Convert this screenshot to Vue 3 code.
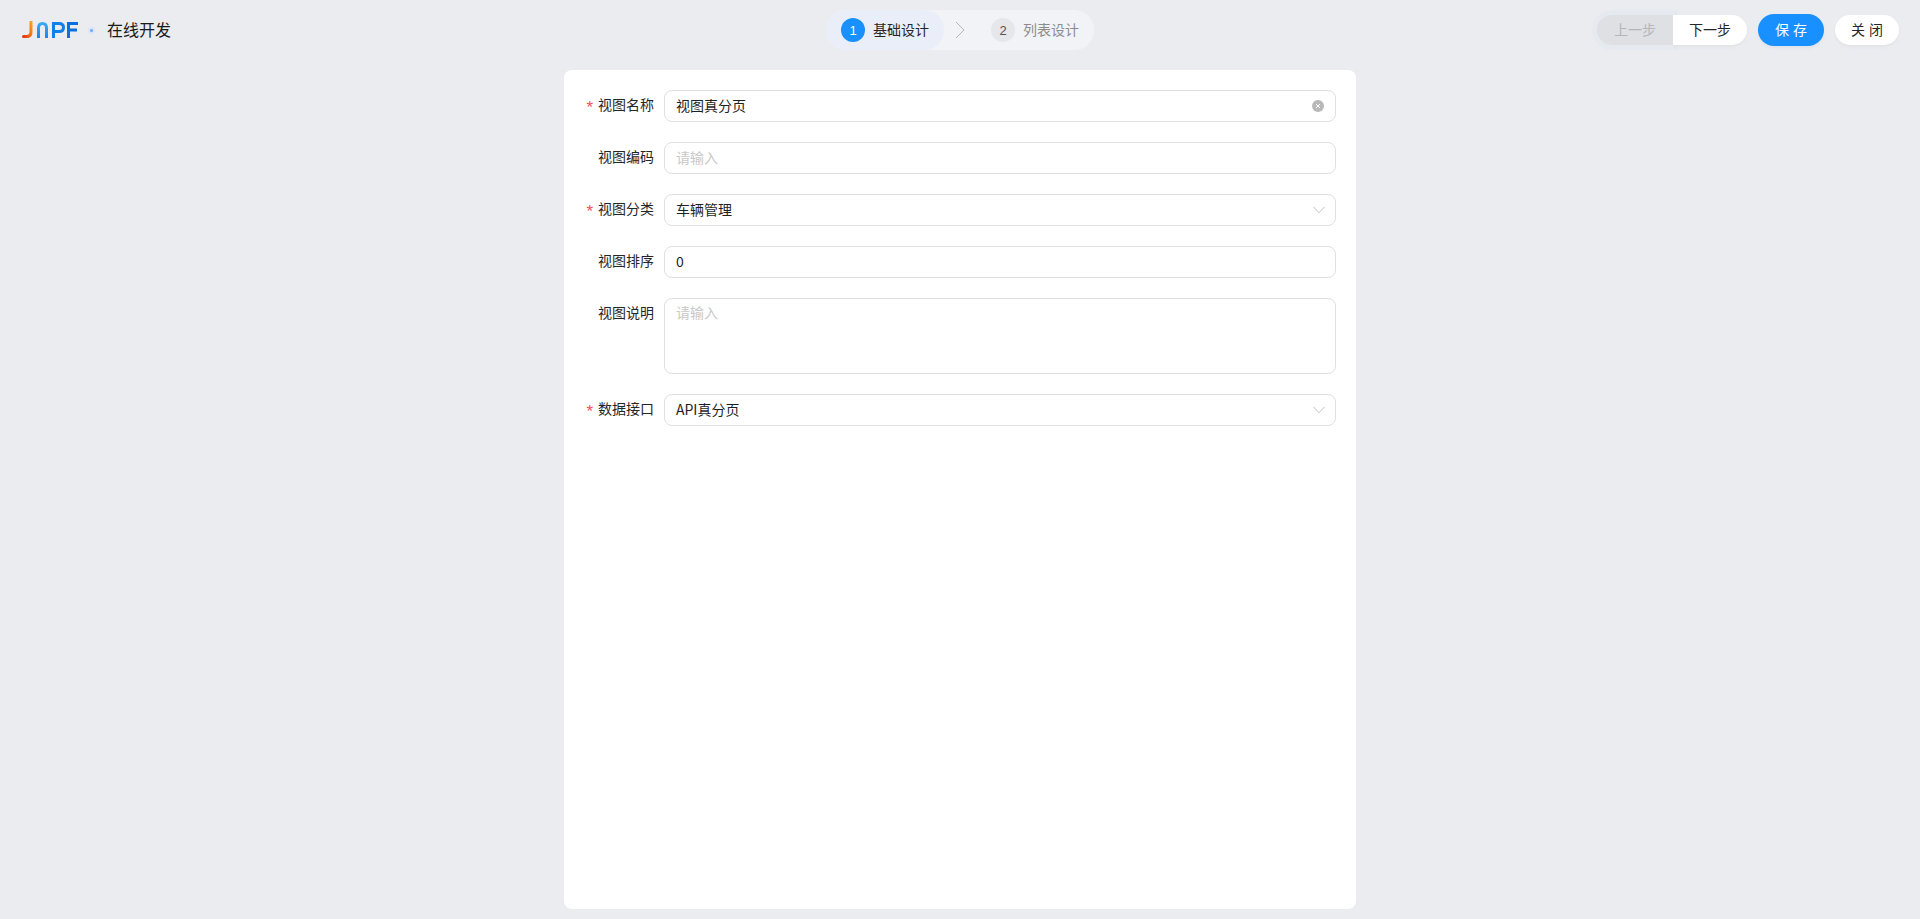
<script setup>
const fields = [
  { label: '视图名称', required: true, value: '视图真分页', clear: true },
  { label: '视图编码', placeholder: '请输入' },
  { label: '视图分类', required: true, value: '车辆管理', arrow: true },
  { label: '视图排序', value: '0' },
  { label: '视图说明', placeholder: '请输入', area: true },
  { label: '数据接口', required: true, value: 'API真分页', arrow: true }
]
</script>

<template>
  <div class="page">
    <header class="head">
      <div class="brand">
        <svg class="logo" width="58" height="18" viewBox="0 0 58 18" fill="none">
          <defs>
            <linearGradient id="jg" x1="0" y1="1" x2="1" y2="0">
              <stop offset="0" stop-color="#e8380d" />
              <stop offset="1" stop-color="#f9a11b" />
            </linearGradient>
            <linearGradient id="ng" x1="0" y1="0" x2="0" y2="1">
              <stop offset="0" stop-color="#3aa8f2" />
              <stop offset="1" stop-color="#1a86e6" />
            </linearGradient>
          </defs>
          <path d="M10 1V11Q10 15.500 5.500 15.500H2.500" stroke="url(#jg)" stroke-width="3" stroke-linecap="round" />
          <path d="M17.500 17V7Q17.500 2.500 21.500 2.500Q25.500 2.500 25.500 7V17" stroke="url(#ng)" stroke-width="3" />
          <path d="M32.500 17V2.500H38Q42.500 2.500 42.500 6.500Q42.500 10.500 38 10.500H33" stroke="#1480e6" stroke-width="3" />
          <path d="M47.500 17V2.500H57M47.500 9H56" stroke="#0b70dc" stroke-width="3" />
        </svg>
        <span class="dot"></span>
        <span class="title">在线开发</span>
      </div>

      <div class="steps">
        <div class="step active">
          <span class="num">1</span>
          <span class="step-text">基础设计</span>
        </div>
        <svg class="chev" width="10" height="18" viewBox="0 0 10 18" fill="none">
          <path d="M1 1L9 9L1 17" stroke="#b4b6bb" stroke-width="1" />
        </svg>
        <div class="step todo">
          <span class="num">2</span>
          <span class="step-text">列表设计</span>
        </div>
      </div>

      <div class="actions">
        <div class="pair">
          <button class="btn prev">上一步</button>
          <button class="btn next">下一步</button>
        </div>
        <button class="btn save">保 存</button>
        <button class="btn close">关 闭</button>
      </div>
    </header>

    <main class="card">
      <div v-for="f in fields" :key="f.label" class="row">
        <label class="label"><i v-if="f.required">*</i>{{ f.label }}</label>
        <div class="input" :class="{ area: f.area }">
          <span v-if="f.value">{{ f.value }}</span>
          <span v-else class="ph">{{ f.placeholder }}</span>
          <svg v-if="f.clear" class="clear" width="12" height="12" viewBox="0 0 12 12">
            <circle cx="6" cy="6" r="6" fill="#b8b8b8" />
            <path d="M4 4L8 8M8 4L4 8" stroke="#fff" stroke-width="1" />
          </svg>
          <svg v-if="f.arrow" class="arrow" width="12" height="8" viewBox="0 0 12 8" fill="none">
            <path d="M.5 .8L6 6.800L11.500 .8" stroke="#c4c4c4" stroke-width="1" />
          </svg>
        </div>
      </div>
    </main>
  </div>
</template>

<style>
html, body { margin: 0; background: #ebecf0; }
</style>

<style scoped>
.page {
  height: 919px;
  box-sizing: border-box;
  padding-bottom: 10px;
  display: flex;
  flex-direction: column;
  background: #ebecf0;
  font-family: "Noto Sans CJK SC", "Noto Sans", sans-serif;
  font-size: 14px;
  color: #1f2329;
  overflow: hidden;
}
.head {
  flex: 0 0 70px;
  height: 70px;
  box-sizing: border-box;
  padding: 0 21px 10px;
  display: grid;
  grid-template-columns: 1fr auto 1fr;
  align-items: center;
}
.brand { display: flex; align-items: center; }
.logo { display: block; }
.dot {
  width: 3px;
  height: 3px;
  margin: 0 14px 0 11px;
  border-radius: 50%;
  background: #6ea8fb;
  box-shadow: 0 0 0 2px #dbe5f7;
}
.title { font-size: 16px; line-height: 20px; padding-bottom: 2px; color: #1a1a1a; }
.steps {
  height: 40px;
  width: 268px;
  display: flex;
  align-items: center;
  border-radius: 20px;
  background: #f2f3f7;
}
.step {
  height: 40px;
  display: flex;
  align-items: center;
  gap: 8px;
  box-sizing: border-box;
  border-radius: 20px;
}
.step-text { line-height: 20px; padding-bottom: 2px; }
.step.active { width: 118px; padding-left: 15px; background: #eaeef8; color: #262626; }
.step.todo { padding-left: 15px; color: #8c8c8c; }
.chev { margin-left: 11px; margin-right: 11px; flex: none; }
.num {
  width: 24px;
  height: 24px;
  border-radius: 50%;
  display: flex;
  align-items: center;
  justify-content: center;
  font-size: 13px;
  font-family: "Liberation Sans", sans-serif;
}
.active .num { background: #1890ff; color: #fff; }
.todo .num { background: #e6e7ea; color: #555; }
.actions { display: flex; align-items: center; justify-content: flex-end; gap: 11px; }
.pair { display: flex; }
.btn {
  border: 0;
  padding: 0 0 2px;
  margin: 0;
  font: inherit;
  font-size: 14px;
  word-spacing: 1px;
  display: block;
}
.prev {
  width: 76px;
  height: 30px;
  border-radius: 15px 0 0 15px;
  background: #dfe0e4;
  color: #b5b5b8;
  box-shadow: 0 0 0 5px #e6e9ef;
}
.next {
  position: relative;
  width: 74px;
  height: 30px;
  border-radius: 0 15px 15px 0;
  background: #fff;
  color: #262626;
  box-shadow: 0 2px 3px #e2e3e7;
}
.save {
  width: 66px;
  height: 32px;
  border-radius: 16px;
  background: #1890ff;
  color: #fff;
  box-shadow: 0 2px 3px #dfe3ea;
}
.close {
  width: 64px;
  height: 30px;
  border-radius: 15px;
  background: #fff;
  color: #262626;
  box-shadow: 0 2px 3px #e2e3e7;
}
.card {
  flex: 1;
  width: 792px;
  margin: 0 auto;
  box-sizing: border-box;
  padding: 20px;
  border-radius: 8px;
  background: #fff;
  display: flex;
  flex-direction: column;
  gap: 20px;
}
.row { display: flex; align-items: flex-start; }
.label {
  width: 80px;
  height: 32px;
  padding-right: 10px;
  box-sizing: border-box;
  line-height: 28px;
  text-align: right;
  white-space: nowrap;
  color: #262626;
}
.label i {
  font-style: normal;
  font-size: 17px;
  line-height: 1;
  vertical-align: -3px;
  color: #ff4d4f;
  margin-right: 5px;
  font-family: "Liberation Sans", sans-serif;
}
.input {
  flex: 1;
  height: 32px;
  box-sizing: border-box;
  border: 1px solid #e0e0e0;
  border-radius: 8px;
  padding: 0 11px;
  display: flex;
  align-items: center;
  justify-content: space-between;
  color: #1f1f1f;
}
.input > span { line-height: 20px; padding-bottom: 2px; }
.input.area { height: 76px; align-items: flex-start; }
.input.area > span { padding-top: 3px; }
.ph { color: #c8c8c8; }
.clear { flex: none; }
.arrow { flex: none; margin-right: -1px; }
</style>
